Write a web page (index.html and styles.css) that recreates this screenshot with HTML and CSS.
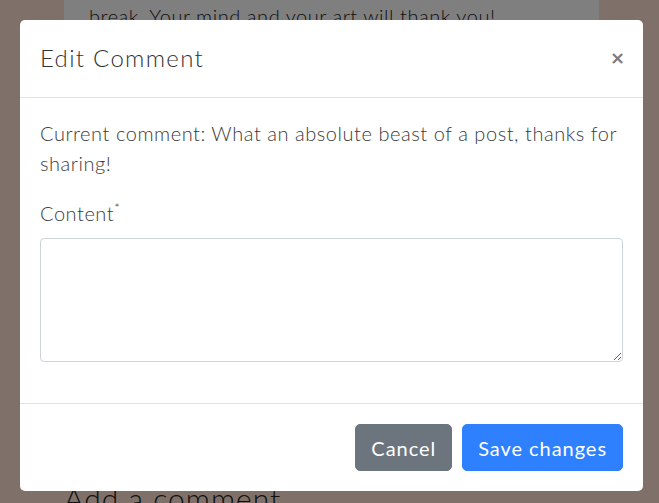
FILE: index.html
```html
<!DOCTYPE html>
<html lang="en">
<head>
<meta charset="utf-8">
<title>Edit Comment</title>
<link rel="stylesheet" href="styles.css">
</head>
<body>
<div class="page">
  <div class="card">
    <p class="card-text">break. Your mind and your art will thank you!</p>
  </div>
  <h2 class="section-title">Add a comment</h2>
</div>
<div class="backdrop"></div>
<div class="modal">
  <div class="modal-header">
    <h5 class="modal-title">Edit Comment</h5>
    <button class="close" type="button" aria-label="Close">&times;</button>
  </div>
  <div class="modal-body">
    <p class="current">Current comment: What an absolute beast of a post, thanks for sharing!</p>
    <div class="form-group">
      <label class="label" for="content">Content<span class="req">*</span></label>
      <textarea id="content" class="textarea"></textarea>
    </div>
  </div>
  <div class="modal-footer">
    <button class="btn btn-secondary" type="button">Cancel</button>
    <button class="btn btn-primary" type="button">Save changes</button>
  </div>
</div>
</body>
</html>
```
FILE: styles.css
```css
* { box-sizing: border-box; }
html, body { margin: 0; height: 100%; }
body {
  background: #fee2d2;
  font-family: Lato, "Open Sans", sans-serif;
  font-weight: 300;
  letter-spacing: 0.55px;
  color: #222;
  overflow: hidden;
  position: relative;
}
.page {
  padding: 0 60px 0 64px;
  height: 100%;
  display: flex;
  flex-direction: column;
  justify-content: space-between;
}
.card {
  background: #fff;
  width: 535px;
  padding: 0 25px;
  height: 60px;
}
.card-text {
  margin: 0;
  font-size: 20px;
  line-height: 30px;
  margin-top: 1px;
}
.section-title {
  margin: 0 0 -15px 0;
  font-size: 30px;
  font-weight: 300;
  letter-spacing: 1px;
  line-height: 40px;
}
.backdrop {
  position: absolute;
  inset: 0;
  background: rgba(0, 0, 0, 0.5);
}
.modal {
  position: absolute;
  left: 20px;
  top: 20px;
  width: 623px;
  background: #fff;
  border-radius: 5px;
  color: #3a3a3a;
  display: flex;
  flex-direction: column;
}
.modal-header {
  display: flex;
  justify-content: space-between;
  align-items: center;
  padding: 20px 20px 21px;
  border-bottom: 1px solid #e2e2e2;
}
.modal-title {
  margin: 0;
  font-size: 24px;
  line-height: 36px;
  font-weight: 300;
  letter-spacing: 1.3px;
  color: #333;
}
.close {
  border: 0;
  background: none;
  padding: 0;
  margin-right: -2px;
  font-family: "DejaVu Sans", sans-serif;
  font-size: 18px;
  font-weight: 700;
  line-height: 1;
  color: #7b7b7b;
}
.modal-body {
  padding: 20px 20px 21px;
  font-size: 20px;
  line-height: 30px;
}
.current { margin: 0 0 20px; }
.form-group {
  display: flex;
  flex-direction: column;
  margin-bottom: 20px;
}
.label { margin-bottom: 10px; }
.req { font-size: 13px; vertical-align: top; line-height: 20px; }
.textarea {
  height: 124px;
  border: 1px solid #ced4da;
  border-radius: 4px;
  font: inherit;
}
.modal-footer {
  display: flex;
  justify-content: flex-end;
  gap: 10px;
  padding: 20px;
  border-top: 1px solid #e2e2e2;
}
.btn {
  font-family: inherit;
  font-size: 20px;
  line-height: 30px;
  font-weight: 400;
  letter-spacing: 0.95px;
  padding: 7.5px 15px;
  border: 1px solid transparent;
  border-radius: 5px;
  color: #fff;
}
.btn-secondary { background: #6c757d; border-color: #6c757d; }
.btn-primary { background: #2f80ff; border-color: #2f80ff; }
```
